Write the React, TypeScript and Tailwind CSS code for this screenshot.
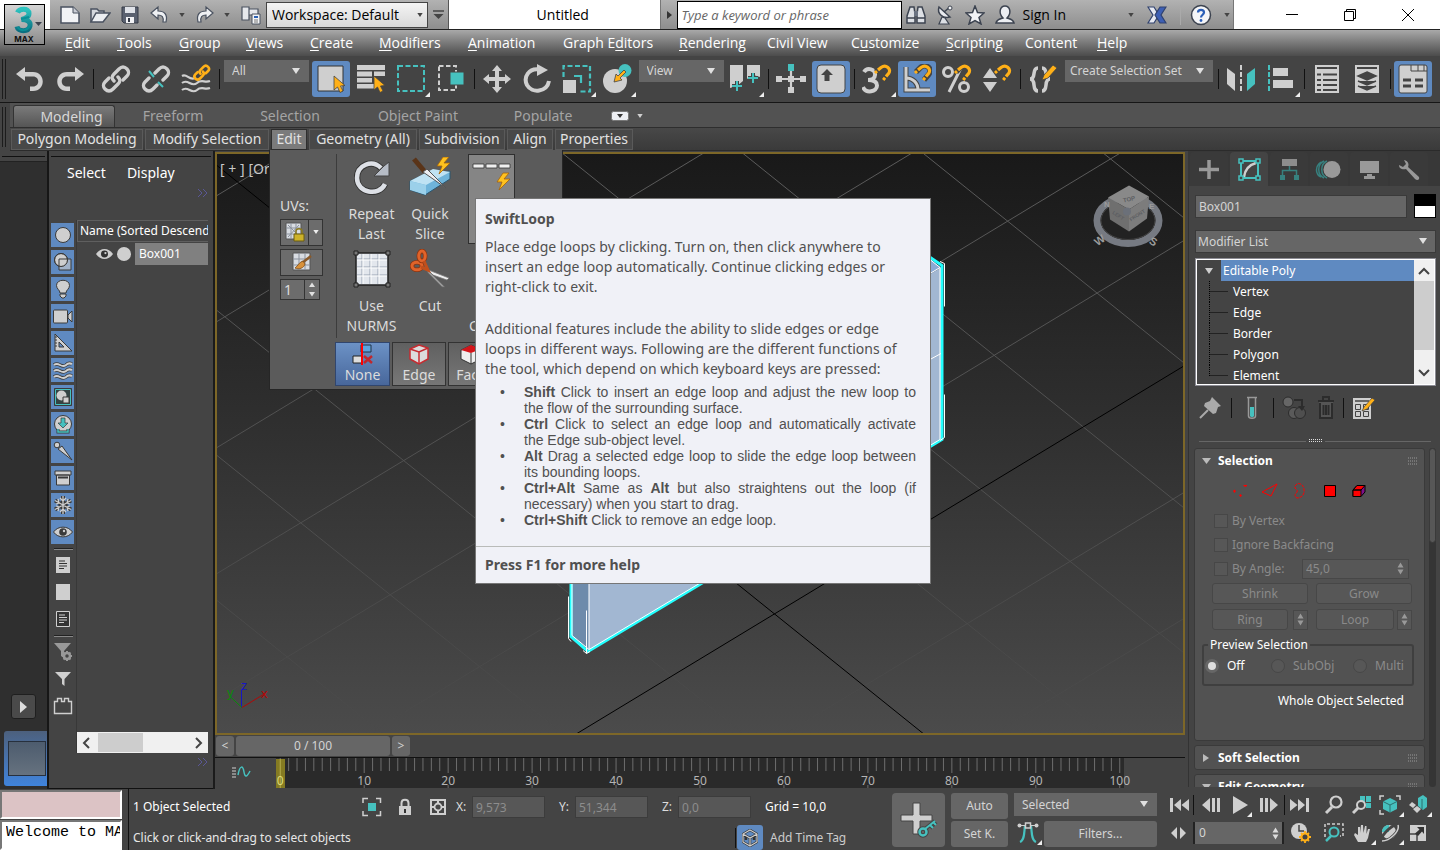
import React from "react";

const L = "#cfcfcf";
const T = "#46c1bf";
const O = "#ffb018";
const D = "#3a3a3a";

type IconProps = { w?: number; h?: number; vb?: string; children: React.ReactNode };
function Icon({ w = 30, h = 30, vb, children }: IconProps) {
  return (
    <svg width={w} height={h} viewBox={vb ?? `0 0 ${w} ${h}`} fill="none" className="shrink-0" aria-hidden="true">
      {children}
    </svg>
  );
}

function Caret({ color = "#e0e0e0", w = 8, h = 6 }: { color?: string; w?: number; h?: number }) {
  return (
    <Icon w={w} h={h} vb="0 0 8 6">
      <path d="M0 0H8L4 6Z" fill={color} />
    </Icon>
  );
}

function UpDown({ color = "#b5b5b5" }: { color?: string }) {
  return (
    <Icon w={7} h={13}>
      <path d="M0.5 5.5L3.5 0.5L6.5 5.5ZM0.5 7.5H6.5L3.5 12.5Z" fill={color} />
    </Icon>
  );
}

/* ---------- Title bar ---------- */

function SmallBtn({ label, width, children }: { label: string; width: string; children: React.ReactNode }) {
  return (
    <button aria-label={label} className={`flex h-7 items-center justify-center ${width}`}>
      {children}
    </button>
  );
}

function TitleBar() {
  return (
    <header className="relative flex h-[30px] items-stretch border-b border-[#222] bg-white font-['Open_Sans',sans-serif] text-[14px] text-black">
      <button
        aria-label="Application menu"
        className="absolute left-1 top-1 z-20 flex h-[41px] w-[41px] items-center border border-black bg-gradient-to-b from-[#d6d6d6] to-[#8b8b8b]"
      >
        <Icon w={39} h={39}>
          <defs>
            <linearGradient id="logo" x1="0" y1="0" x2="0" y2="1">
              <stop offset="0" stopColor="#2ec4c0" />
              <stop offset="1" stopColor="#0b6f80" />
            </linearGradient>
          </defs>
          <path d="M12.500 7.500C14 3.500 24 2.500 24 8.500C24 12.500 20 13.500 16.500 14.500C22 14.500 26 16.500 25 21C23.500 27.500 13 27 12 21.500" stroke="url(#logo)" strokeWidth="5" />
          <path d="M16 14L24 12M12.500 22C15 26 22 27 25 20" stroke="#0a8f96" strokeWidth="2" />
          <path d="M30 17H37L33.500 21Z" fill="#3d4450" />
          <text x="19" y="37" textAnchor="middle" fontSize="8" fontWeight="700" fill="#111" fontFamily="Inter">MAX</text>
        </Icon>
      </button>
      <div className="w-[50px] shrink-0" />
      <div className="flex shrink-0 items-center border-r border-[#555] bg-gradient-to-b from-[#b2b2b2] to-[#8e8e8e] pl-[5px]">
        <SmallBtn label="New" width="w-[30px]">
          <Icon w={22} h={20}><path d="M2 2H14L20 8V18H2Z" fill="#f1f2f5" stroke="#4a5260" strokeWidth="1.500" /><path d="M14 2V8H20" fill="#c9ccd4" stroke="#4a5260" /></Icon>
        </SmallBtn>
        <SmallBtn label="Open" width="w-[30px]">
          <Icon w={22} h={20}><path d="M2 17V4H8L10 6H15V9" fill="#d4d7dd" stroke="#4a5260" strokeWidth="1.500" /><path d="M2 17L7 8H21L14 17Z" fill="#eceef2" stroke="#4a5260" strokeWidth="1.500" /></Icon>
        </SmallBtn>
        <SmallBtn label="Save" width="w-[30px]">
          <Icon w={20} h={20}><path d="M2 2H18V18H4L2 16Z" fill="#5a6170" stroke="#343a46" /><path d="M5 2H15V8H5Z" fill="#dfe2e8" /><path d="M6 12H14V18H6Z" fill="#f1f2f5" /><path d="M8 13H10V17H8Z" fill="#343a46" /></Icon>
        </SmallBtn>
        <SmallBtn label="Undo" width="w-[30px]">
          <Icon w={22} h={20}><path d="M2 8L9 2V6C15 6 19 9 17 17H14C15 12 13 10 9 10V14Z" fill="#eef0f3" stroke="#4a5260" strokeWidth="1.200" /></Icon>
        </SmallBtn>
        <SmallBtn label="Undo history" width="w-[14px]"><Caret color="#444" w={6} h={4} /></SmallBtn>
        <SmallBtn label="Redo" width="w-[30px]">
          <Icon w={22} h={20}><path d="M20 8L13 2V6C7 6 3 9 5 17H8C7 12 9 10 13 10V14Z" fill="#eef0f3" stroke="#4a5260" strokeWidth="1.200" /></Icon>
        </SmallBtn>
        <SmallBtn label="Redo history" width="w-[16px]"><Caret color="#444" w={6} h={4} /></SmallBtn>
        <SmallBtn label="Project folder" width="w-[31px]">
          <Icon w={22} h={22}><path d="M2 3H9V16H2ZM9 5H18V11H9Z" fill="#e6e8ec" stroke="#4a5260" strokeWidth="1.200" /><path d="M12 10H20V20H12Z" fill="#f4f5f7" stroke="#4a5260" /><path d="M14 12H18V14H14Z" fill="#2b62b5" /><path d="M14 16H18M14 18H18" stroke="#777" /></Icon>
        </SmallBtn>
        <div className="relative">
          <select aria-label="Workspace" defaultValue="d" className="block h-[26px] w-[162px] appearance-none border border-[#444] bg-gradient-to-b from-[#f4f4f4] to-[#d9d9d9] pl-[5px] text-[14px]">
            <option value="d">Workspace: Default</option>
          </select>
          <span className="pointer-events-none absolute right-[5px] top-[11px]"><Caret color="#444" w={6} h={4} /></span>
        </div>
        <SmallBtn label="Customize quick access" width="w-[20px]">
          <Icon w={11} h={9}><path d="M0 1H11" stroke="#444" strokeWidth="1.500" /><path d="M0.500 4H10.500L5.500 9Z" fill="#444" /></Icon>
        </SmallBtn>
      </div>
      <h1 className="flex flex-1 items-center justify-center pl-4">Untitled</h1>
      <div className="flex shrink-0 items-center border-x border-[#777] bg-gradient-to-b from-[#b2b2b2] to-[#8e8e8e]">
        <SmallBtn label="Collapse search" width="w-4"><Icon w={5} h={8}><path d="M0 0L5 4L0 8Z" fill="#333" /></Icon></SmallBtn>
        <input aria-label="Search help" placeholder="Type a keyword or phrase" className="h-7 w-[225px] border border-black bg-white pl-[3px] text-[13px] italic placeholder:text-[#666]" />
        <SmallBtn label="Search" width="w-[28px]">
          <Icon w={22} h={22}><path d="M2 12L5 3H9L10 10V19H2ZM20 12L17 3H13L12 10V19H20Z" fill="#dde0e5" stroke="#3c4350" strokeWidth="1.500" /><path d="M9 7H13V12H9Z" fill="#6b7382" /><path d="M2 14H10M12 14H20" stroke="#3c4350" strokeWidth="1.500" /></Icon>
        </SmallBtn>
        <SmallBtn label="Communication center" width="w-[30px]">
          <Icon w={20} h={22}><path d="M4 3C2 9 7 15 15 13Z" fill="#e8eaee" stroke="#3c4350" strokeWidth="1.500" /><path d="M9 8L15 3" stroke="#3c4350" strokeWidth="1.500" /><circle cx="15" cy="4" r="2" fill="#f4f5f7" stroke="#3c4350" /><path d="M7 13L4 20H14L10 14Z" fill="#dcdfe4" stroke="#3c4350" strokeWidth="1.200" /></Icon>
        </SmallBtn>
        <SmallBtn label="Favorites" width="w-[30px]">
          <Icon w={20} h={20}><path d="M10 1L12.500 7.500L19 8L14 12.500L16 19L10 15.500L4 19L6 12.500L1 8L7.500 7.500Z" fill="#f1f2f5" stroke="#3c4350" strokeWidth="1.500" /></Icon>
        </SmallBtn>
        <button className="flex items-center gap-[7px] pl-[5px] pr-[62px]">
          <Icon w={20} h={20}><path d="M1 18C2 14 5 14 8 13C3 8 5 1 10 1C15 1 17 8 12 13C15 14 18 14 19 18Z" fill="#eceef2" stroke="#3c4350" strokeWidth="1.500" /></Icon>
          <span>Sign In</span>
        </button>
        <Caret color="#444" w={6} h={4} />
        <SmallBtn label="Exchange" width="w-[46px]">
          <Icon w={20} h={18}><path d="M1 1H7L10 6V12L7 17H1L6 9Z" fill="#e6e9f2" stroke="#30426f" strokeWidth="1.200" /><path d="M19 1H13L8 9L13 17H19L14 9Z" fill="#3d5fb4" stroke="#30426f" strokeWidth="1.200" /></Icon>
        </SmallBtn>
        <span className="h-5 w-px bg-[#aaa]" />
        <SmallBtn label="Help" width="w-[40px]">
          <Icon w={22} h={22}><circle cx="11" cy="11" r="9.500" fill="#f4f5f8" stroke="#3c4350" strokeWidth="1.500" /><path d="M8 8.500C8 5 14 5 14 8.500C14 10.500 11 11 11 13.500" stroke="#2c5fb8" strokeWidth="2.200" /><circle cx="11" cy="16.500" r="1.400" fill="#2c5fb8" /></Icon>
        </SmallBtn>
        <SmallBtn label="Help menu" width="w-[12px]"><Caret color="#444" w={6} h={4} /></SmallBtn>
      </div>
      <div className="flex w-[206px] shrink-0 items-center justify-end pr-[3px]">
        <button aria-label="Minimize" className="flex w-[58px] justify-center"><Icon w={12} h={12}><path d="M0 5.500H12" stroke="#000" /></Icon></button>
        <button aria-label="Restore" className="flex w-[58px] justify-center"><Icon w={12} h={12}><path d="M0.500 2.500H9.500V11.500H0.500ZM2.500 2.500V0.500H11.500V9.500H9.500" stroke="#000" /></Icon></button>
        <button aria-label="Close" className="flex w-[58px] justify-center"><Icon w={12} h={12}><path d="M0 0L12 12M12 0L0 12" stroke="#000" /></Icon></button>
      </div>
    </header>
  );
}

/* ---------- Menu bar ---------- */

const menus: [string, number, string][] = [
  ["Edit", 0, "w-[52px]"],
  ["Tools", 0, "w-[62px]"],
  ["Group", 0, "w-[67px]"],
  ["Views", 0, "w-[64px]"],
  ["Create", 0, "w-[69px]"],
  ["Modifiers", 0, "w-[89px]"],
  ["Animation", 0, "w-[95px]"],
  ["Graph Editors", 7, "w-[116px]"],
  ["Rendering", 0, "w-[88px]"],
  ["Civil View", -1, "w-[84px]"],
  ["Customize", 1, "w-[95px]"],
  ["Scripting", 0, "w-[79px]"],
  ["Content", -1, "w-[72px]"],
  ["Help", 0, "w-[60px]"],
];

function MenuBar() {
  return (
    <nav className="flex h-[26px] items-center bg-gradient-to-b from-[#a9a9a9] to-[#4c4c4c] pb-[2px] pl-[65px] font-['Open_Sans',sans-serif] text-[14px] text-white">
      {menus.map(([name, u, w]) => (
        <button key={name} className={`whitespace-nowrap text-left ${w}`}>
          {u < 0 ? name : (
            <>{name.slice(0, u)}<span className="underline underline-offset-2">{name[u]}</span>{name.slice(u + 1)}</>
          )}
        </button>
      ))}
    </nav>
  );
}

/* ---------- Main toolbar ---------- */

function Sep() {
  return <span className="flex w-[6px] shrink-0 justify-center"><span className="h-5 w-px bg-[#111]" /></span>;
}

function Tool({ label, on, more, children }: { label: string; on?: boolean; more?: boolean; children: React.ReactNode }) {
  return (
    <button aria-label={label} className="flex h-9 w-10 shrink-0 items-center justify-center">
      <span className={`relative flex h-9 w-[38px] items-center justify-center rounded-[3px] ${on ? "bg-[#5f8ac1]" : ""}`}>
        {children}
        {more && <span className="absolute bottom-0 right-0"><Icon w={5} h={5}><path d="M5 0V5H0Z" fill="#eee" /></Icon></span>}
      </span>
    </button>
  );
}

function ToolSelect({ label, value, box, cell }: { label: string; value: string; box: string; cell: string }) {
  return (
    <div className={`flex h-[38px] shrink-0 items-start justify-center ${cell}`}>
      <div className="relative">
        <select aria-label={label} defaultValue={value} className={`block h-[22px] appearance-none bg-[#666] text-[12px] text-[#d4d4d4] ${box}`}>
          <option>{value}</option>
        </select>
        <span className="pointer-events-none absolute right-[9px] top-2"><Caret /></span>
      </div>
    </div>
  );
}

const chain = (c: string) => (
  <g stroke={c} strokeWidth="3.400" strokeLinecap="round">
    <path d="M13 17C10 14 11 12 13 10L18 5C21 2 24 3 26 5C28 7 28 10 26 12L22 16" />
    <path d="M17 13C20 16 19 18 17 20L12 25C9 28 6 27 4 25C2 23 2 20 4 18L8 14" />
  </g>
);

const magnet = (
  <g>
    <path d="M14 8L18 4C23 -1 31 4 27 10L22 16" stroke="#444" strokeWidth="5.500" />
    <path d="M16 6L19 3.500C24 0 30 5 26.500 9.500L24 12.500" stroke={O} strokeWidth="3.200" />
    <path d="M13 9L15 7.200M23 13.800L21.200 16" stroke={O} strokeWidth="3" />
  </g>
);

const pointer = <path d="M18 12V26L21.500 23L24 28.500L27 27L24.500 22L29 21.500Z" fill={O} stroke="#444" strokeWidth="0.800" />;

function MainToolbar() {
  return (
    <div className="flex h-[47px] items-center border-b border-[#161616] bg-[#444] pl-[2px] text-[#d4d4d4]">
      <span className="mr-1 h-10 w-1 shrink-0 border-x border-[#1c1c1c]" />
      <Tool label="Undo"><Icon><path d="M1 10L10 3V8H18C31 8 31 27 18 27H15V22.500H18C25 22.500 25 12.500 18 12.500H10V17Z" fill={L} /></Icon></Tool>
      <Tool label="Redo"><Icon><path d="M29 10L20 3V8H12C-1 8 -1 27 12 27H15V22.500H12C5 22.500 5 12.500 12 12.500H20V17Z" fill={L} /></Icon></Tool>
      <Sep />
      <Tool label="Link"><Icon>{chain(L)}</Icon></Tool>
      <Tool label="Unlink">
        <Icon>
          <g stroke={L} strokeWidth="3.400" strokeLinecap="round">
            <path d="M14 9L18 5C21 2 24 3 26 5C28 7 28 10 26 12L22 16" />
            <path d="M16 21L12 25C9 28 6 27 4 25C2 23 2 20 4 18L8 14" />
          </g>
          <path d="M8 7L13 13M17 18L22 23" stroke={T} strokeWidth="2" />
        </Icon>
      </Tool>
      <Tool label="Bind to space warp">
        <Icon>
          <path d="M1 12C6 9 8 17 14 14M1 19C7 14 10 24 16 19C20 15 24 19 29 17M1 26C7 21 10 31 16 26C20 22 24 26 29 24" stroke={L} strokeWidth="2.200" />
          <g transform="translate(12 0) scale(0.58)" stroke={O} strokeWidth="4.500" strokeLinecap="round">
            <path d="M13 17C10 14 11 12 13 10L18 5C21 2 24 3 26 5C28 7 28 10 26 12L22 16" />
            <path d="M17 13C20 16 19 18 17 20L12 25C9 28 6 27 4 25C2 23 2 20 4 18L8 14" />
          </g>
        </Icon>
      </Tool>
      <Sep />
      <ToolSelect label="Selection filter" value="All" box="w-[85px] pl-2" cell="w-[89px]" />
      <Tool label="Select object" on><Icon><path d="M2 2H27V27H2Z" fill={L} stroke="#333" />{pointer}</Icon></Tool>
      <Tool label="Select by name"><Icon><path d="M1 1H29V6H1ZM1 7.500H16V12.500H1ZM1 14H16V18.500H1ZM1 20H18V24.500H1ZM18 7.500H29V12H18Z" fill={L} />{pointer}</Icon></Tool>
      <Tool label="Rectangular region" more><Icon><path d="M2 2H28V27H2Z" stroke={T} strokeWidth="2" strokeDasharray="5 2.500" /></Icon></Tool>
      <Tool label="Window crossing"><Icon><path d="M3 2H20V26H3Z" stroke={L} strokeWidth="2" strokeDasharray="4.500 2.500" /><path d="M14 8H28V21H14Z" fill={T} stroke="#444" /></Icon></Tool>
      <Sep />
      <Tool label="Move"><Icon><path d="M15 1L20 7H17V13H23V10L29 15L23 20V17H17V23H20L15 29L10 23H13V17H7V20L1 15L7 10V13H13V7H10Z" fill={L} /></Icon></Tool>
      <Tool label="Rotate"><Icon><path d="M17 5.500C7 4 1 13 5 21C10 30 25 28 27 17" stroke={L} strokeWidth="4" /><path d="M15 0L26 6L15 12Z" fill={L} /></Icon></Tool>
      <Tool label="Scale" more><Icon><path d="M1.500 13V2H28V27.500H17" stroke={T} strokeWidth="2.200" strokeDasharray="5 2.500" /><path d="M1 16H14V29H1Z" fill={L} /><path d="M12 12H19V19" stroke={T} strokeWidth="2.200" /></Icon></Tool>
      <Tool label="Place" more><Icon><circle cx="13" cy="17" r="12" fill={L} /><circle cx="23" cy="6.500" r="6.500" fill={T} /><path d="M12 18L14 10L16 12L22 6L24 8L18 14L20 16Z" fill={O} stroke="#444" strokeWidth="0.800" /></Icon></Tool>
      <ToolSelect label="Reference coordinates" value="View" box="w-[85px] pl-2" cell="w-[88px]" />
      <Tool label="Pivot center" more><Icon w={32} h={30}><path d="M1 1H14V17L8 22L1 24ZM18 1H31V13L24 11L18 15Z" fill={L} /><path d="M8 17V27M3 22H13M24 9V19M19 14H29" stroke="#444" strokeWidth="4" /><path d="M8 17V27M3 22H13M24 9V19M19 14H29" stroke={T} strokeWidth="2" /></Icon></Tool>
      <Sep />
      <Tool label="Manipulate"><Icon><path d="M15 5V25M4 15H26" stroke={L} strokeWidth="2.200" /><path d="M12 0H18V7H12Z" fill={T} /><path d="M0 12H6V18H0ZM24 12H30V18H24ZM12 23H18V29H12Z" fill={L} /><path d="M12 12H18V18H12Z" fill={L} /></Icon></Tool>
      <Tool label="Keyboard override" on><Icon><rect x="1" y="1" width="28" height="28" rx="4" fill={L} stroke="#444" /><path d="M11 5L17 11H13.500V17H8.500V11H5Z" fill="#444" /></Icon></Tool>
      <Sep />
      <Tool label="Snaps" more><Icon><path d="M2 8C5 3 14 5 13 11C13 14 10 16 6 16C11 16 15 17 15 21.500C15 28 4 30 1 23" stroke={L} strokeWidth="4" />{magnet}</Icon></Tool>
      <Tool label="Angle snap" on><Icon><path d="M4 3V26H28M4 14C11 14 16 19 16 26" stroke="#444" strokeWidth="5" /><path d="M4 3V26H28M4 14C11 14 16 19 16 26" stroke={L} strokeWidth="3" />{magnet}</Icon></Tool>
      <Tool label="Percent snap"><Icon><circle cx="6" cy="8" r="4.500" stroke={L} strokeWidth="3" /><circle cx="22" cy="23" r="4.500" stroke={L} strokeWidth="3" /><path d="M19 4L7 28" stroke={L} strokeWidth="3" />{magnet}</Icon></Tool>
      <Tool label="Spinner snap"><Icon><path d="M1 14L8 4L15 14ZM1 18H15L8 28Z" fill={L} />{magnet}</Icon></Tool>
      <Sep />
      <Tool label="Edit selection sets"><Icon><path d="M10 4C3 4 9 15 2 15C9 15 3 27 10 27M14 4C21 4 15 15 22 15C15 15 21 27 14 27" stroke={L} strokeWidth="3.500" /><path d="M14 16L16 11L25 1L29 4L20 14Z" fill={O} stroke="#444" strokeWidth="0.800" /></Icon></Tool>
      <ToolSelect label="Create selection set" value="Create Selection Set" box="w-[148px] pl-[5px]" cell="w-[152px]" />
      <Sep />
      <Tool label="Mirror"><Icon><path d="M1 4L9 10V27L1 20Z" fill={L} /><path d="M29 4L21 10V27L29 20Z" fill={T} /><path d="M15 1V29" stroke={L} strokeWidth="2" strokeDasharray="5 2" /></Icon></Tool>
      <Tool label="Align" more><Icon><path d="M3 1V29" stroke={T} strokeWidth="2" strokeDasharray="5 2" /><path d="M7 4H22V12H7ZM7 16H27V24H7Z" fill={L} /></Icon></Tool>
      <Sep />
      <Tool label="Layer explorer"><Icon><path d="M3 1H27V29H3Z" fill={L} /><path d="M5 4H25M5 10.500H9M11 10.500H25M5 16H9M11 16H25M5 21H9M11 21H25M5 26H9M11 26H25" stroke="#444" strokeWidth="2.200" /></Icon></Tool>
      <Tool label="Layer manager"><Icon><path d="M3 1H27V29H3Z" fill={L} /><path d="M5 4H25" stroke="#444" strokeWidth="2" /><path d="M15 8L24 12L15 16L6 12ZM6 17L15 21L24 17M6 22L15 26L24 22" fill="#444" stroke="#444" strokeWidth="1.500" /></Icon></Tool>
      <Sep />
      <Tool label="Toggle ribbon" on><Icon><rect x="1" y="1" width="28" height="28" rx="2" fill={L} stroke="#444" /><path d="M13 1V7H29M20 1V7M26 1V7" stroke="#444" /><path d="M5 16H13M17 16H25M5 22H13M17 22H25" stroke="#444" strokeWidth="3" /></Icon></Tool>
    </div>
  );
}

/* ---------- Ribbon ---------- */

const ribbonTabs: [string, string][] = [
  ["Freeform", "w-[116px]"],
  ["Selection", "w-[118px]"],
  ["Object Paint", "w-[138px]"],
  ["Populate", "w-[112px]"],
];

function RibbonBtn({ name, width }: { name: string; width: string }) {
  return <button className={`h-[21px] whitespace-nowrap border border-[#5a5a5a] bg-[#484848] text-center leading-[18px] ${width}`}>{name}</button>;
}

function Ribbon() {
  return (
    <div className="flex h-12 shrink-0 bg-[#444] font-['Noto_Sans',sans-serif] text-[14px] text-[#e2e2e2]">
      <div className="w-[10px] shrink-0 py-1 pl-[2px]"><div className="h-full w-1 border-x border-[#1c1c1c]" /></div>
      <div className="flex-1">
        <div className="flex h-[25px] items-end border-b border-[#2e2e2e] bg-[#525252] pl-[3px] text-[#a4a4a4]">
          <button className="h-[22px] w-[102px] rounded-t-[3px] border border-b-0 border-[#333] bg-gradient-to-b from-[#7b7b7b] to-[#555] pl-[15px] leading-5 text-[#d8d8d8]">Modeling</button>
          {ribbonTabs.map(([n, w]) => <button key={n} className={`h-[22px] leading-5 ${w}`}>{n}</button>)}
          <button aria-label="Ribbon display" className="flex h-[22px] items-center gap-2 pl-3">
            <Icon w={18} h={10}><rect x="0.500" y="0.500" width="17" height="9" rx="2" fill="#eceef2" stroke="#777" /><path d="M6 3H12L9 7Z" fill="#333" /></Icon>
            <Caret color="#d0d0d0" w={6} h={4} />
          </button>
        </div>
        <div className="flex h-[23px] items-center gap-[2px] border-b border-[#2b2b2b] bg-gradient-to-b from-[#484848] to-[#3a3a3a] pl-px">
          <RibbonBtn name="Polygon Modeling" width="w-[132px]" />
          <RibbonBtn name="Modify Selection" width="w-[124px]" />
          <div className="relative z-30 w-[36px]">
            <button className="h-[21px] w-full border border-[#2e2e2e] bg-[#7b7b7b] leading-[18px]">Edit</button>
            <EditPanel />
          </div>
          <RibbonBtn name="Geometry (All)" width="w-[108px]" />
          <RibbonBtn name="Subdivision" width="w-[86px]" />
          <RibbonBtn name="Align" width="w-[46px]" />
          <RibbonBtn name="Properties" width="w-[78px]" />
        </div>
      </div>
    </div>
  );
}

function BigTool({ lines, children, width }: { lines: string[]; children: React.ReactNode; width: string }) {
  return (
    <button className={`flex flex-col items-center ${width}`}>
      <span className="mb-1 flex h-[46px] items-center">{children}</span>
      {lines.map((l) => <span key={l} className="whitespace-nowrap leading-5">{l}</span>)}
    </button>
  );
}

const bolt = <path d="M8 0L2 9H7L4 17L15 6H9L14 0Z" fill="#ffc21f" stroke="#a4620a" strokeWidth="0.800" />;

function EditPanel() {
  return (
    <div className="absolute -left-[2px] top-full h-[240px] w-[294px] border border-t-0 border-[#262626] bg-[#5b5b5b] text-[#dcdcdc]">
      <div className="flex h-[188px] pt-1">
        <div className="flex w-[67px] flex-col gap-[3px] border-r border-[#3c3c3c] pl-[10px] pt-[42px]">
          <span className="leading-5">UVs:</span>
          <div className="flex h-[27px] w-[43px] border border-[#333] bg-[#6c6c6c]">
            <button aria-label="Preserve UVs" className="flex w-7 items-center justify-center border-r border-[#333]">
              <Icon w={20} h={20}><path d="M1 1H16V17H1Z" fill="#d8dce2" stroke="#555" /><path d="M1 6H16M1 12H16M6 1V17M11 1V17M3 3L14 14M14 3L3 15" stroke="#8a919c" /><path d="M11 12V9C11 6 17 6 17 9V12" stroke="#8a7a20" strokeWidth="1.500" /><path d="M9 12H19V19H9Z" fill="#cdb22a" stroke="#6d5e10" /></Icon>
            </button>
            <button aria-label="Preserve UVs settings" className="flex flex-1 items-center justify-center"><Caret color="#eee" w={6} h={4} /></button>
          </div>
          <button aria-label="Tweak UVs" className="flex h-[27px] w-[43px] items-center justify-center border border-[#333] bg-[#6c6c6c]">
            <Icon w={20} h={20}><path d="M1 1H18V18H1Z" fill="#d8dce2" stroke="#555" /><path d="M1 7H18M1 13H18M7 1V18M13 1V18" stroke="#8a919c" /><path d="M19 4L10 11" stroke="#8a5a2a" strokeWidth="2.500" /><path d="M11 9C7 10 6 14 3 16C7 18 12 16 13 12Z" fill="#d8913a" stroke="#7a4a18" strokeWidth="0.800" /></Icon>
          </button>
          <div className="flex h-[21px] w-10 items-center border border-[#333] bg-[#6c6c6c]">
            <input aria-label="Iterations" defaultValue="1" className="h-full w-6 border-r border-[#333] bg-transparent pl-[3px]" />
            <span className="flex flex-1 justify-center"><Icon w={8} h={17}><path d="M1 6L4 1.500L7 6ZM1 11H7L4 15.500Z" fill="#e0e0e0" /></Icon></span>
          </div>
        </div>
        <div className="flex flex-1">
          <div className="flex w-[69px] flex-col items-center gap-[2px]">
            <BigTool lines={["Repeat", "Last"]} width="w-[69px]">
              <Icon w={36} h={36}><path d="M27 9C18 0 3 6 3 19C3 34 25 38 31 25" stroke="#333" strokeWidth="6.500" /><path d="M27 9C18 0 3 6 3 19C3 34 25 38 31 25" stroke="#dde0e6" strokeWidth="4.500" /><path d="M35 3V17H20L25 12L30 7Z" fill="#b6bcc6" stroke="#444" /></Icon>
            </BigTool>
            <BigTool lines={["Use", "NURMS"]} width="w-[73px]">
              <Icon w={38} h={38}><path d="M3 3H35V35H3Z" fill="#e3e7ed" stroke="#222" strokeWidth="1.500" /><path d="M9 4V34M17 4V34M25 4V34M4 9H34M4 17H34M4 25H34" stroke="#98a3b3" /><path d="M10 4V34M18 4V34M26 4V34M4 10H34M4 18H34M4 26H34" stroke="#fff" /><path d="M1 1H5V5H1ZM33 1H37V5H33ZM1 33H5V37H1ZM33 33H37V37H33Z" fill="#777" stroke="#222" /></Icon>
            </BigTool>
          </div>
          <div className="flex w-12 flex-col items-center gap-[2px]">
            <BigTool lines={["Quick", "Slice"]} width="w-[48px]">
              <Icon w={42} h={40}><path d="M1 24L16 17L41 14V22L16 38L1 33Z" fill="#6fb4da" stroke="#2b566f" /><path d="M1 24L24 12L41 15L17 28Z" fill="#bfe2f3" /><path d="M1 24L17 28V38L1 33Z" fill="#9bd0ea" /><path d="M5 2L16 15" stroke="#5a3418" strokeWidth="5" /><path d="M14 15L18 12L37 31Z" fill="#eceef2" stroke="#555" /><g transform="translate(26 0)">{bolt}</g></Icon>
            </BigTool>
            <BigTool lines={["Cut"]} width="w-[48px]">
              <Icon w={40} h={40}><path d="M16 20L39 29L37 31L20 25Z" fill="#eee" stroke="#777" strokeWidth="0.800" /><path d="M16 19L35 38L32 38L18 24Z" fill="#999" stroke="#666" strokeWidth="0.800" /><ellipse cx="7" cy="17" rx="5" ry="3.800" stroke="#8f3510" strokeWidth="4.500" /><ellipse cx="7" cy="17" rx="5" ry="3.800" stroke="#e0632a" strokeWidth="3" /><ellipse cx="12" cy="7" rx="3.200" ry="5" stroke="#8f3510" strokeWidth="4.500" /><ellipse cx="12" cy="7" rx="3.200" ry="5" stroke="#e0632a" strokeWidth="3" /><path d="M11 18L18 21L14 12" stroke="#c04f1c" strokeWidth="3" /></Icon>
            </BigTool>
          </div>
          <div className="relative w-[70px] pl-[14px]">
            <button aria-label="SwiftLoop" className="flex h-[90px] w-[47px] flex-col items-center border border-[#2f2f2f] bg-[#858585] pt-2">
              <Icon w={40} h={28}><path d="M1 1H12V5H1ZM14 1H25V5H14ZM27 1H38V5H27Z" fill="#f0f0f0" stroke="#333" strokeWidth="0.800" /><g transform="translate(23 10)">{bolt}</g></Icon>
            </button>
            <div className="whitespace-nowrap pl-px pt-[72px] leading-5">Constraints</div>
            <Tooltip />
          </div>
        </div>
      </div>
      <div className="flex gap-[2px] overflow-hidden pl-[65px] pt-1">
        <button className="flex h-11 w-[55px] flex-col items-center border border-[#31466e] bg-gradient-to-b from-[#6c92c6] to-[#48679b]">
          <Icon w={22} h={22}><path d="M9 2H19V9H9Z" fill="#5aa3df" stroke="#234" /><path d="M1 13H10V20H1Z" fill="#ddd" stroke="#222" /><path d="M10 0V22" stroke="#f00" strokeWidth="2" /><path d="M12 13L20 20M20 13L12 20" stroke="#c0282d" strokeWidth="2.500" /></Icon>
          <span className="leading-5">None</span>
        </button>
        <button className="flex h-11 w-[54px] flex-col items-center border border-[#333] bg-gradient-to-b from-[#606060] to-[#777]">
          <Icon w={22} h={22}><path d="M2 6L11 2L20 5V16L11 21L2 16Z" fill="#dcdcdc" stroke="#c62b30" strokeWidth="1.500" /><path d="M2 6L11 9L20 5M11 9V21" stroke="#c62b30" strokeWidth="1.500" /></Icon>
          <span className="leading-5">Edge</span>
        </button>
        <button className="flex h-11 w-[46px] flex-col items-center border border-[#333] bg-gradient-to-b from-[#606060] to-[#777]">
          <Icon w={22} h={22}><path d="M1 7L11 2L21 6V16L11 21L1 16Z" fill="#eee" stroke="#333" /><path d="M1 7L11 2L21 6L11 10Z" fill="#d3141a" /><path d="M11 10V21" stroke="#333" /></Icon>
          <span className="leading-5">Face</span>
        </button>
      </div>
    </div>
  );
}

const keys: React.ReactNode[] = [
  <><b>Shift</b> Click to insert an edge loop and adjust the new loop to the flow of the surrounding surface.</>,
  <><b>Ctrl</b> Click to select an edge loop and automatically activate the{"\u00a0"}Edge sub-object level.</>,
  <><b>Alt</b> Drag a selected edge loop to slide the edge loop between its bounding loops.</>,
  <><b>Ctrl+Alt</b> Same as <b>Alt</b> but also straightens out the loop (if necessary) when you start to drag.</>,
  <><b>Ctrl+Shift</b> Click to remove an edge loop.</>,
];

function Tooltip() {
  return (
    <div role="tooltip" className="absolute left-[21px] top-[44px] w-[456px] border border-[#767676] bg-[#f0f1f7] text-[#505050]">
      <div className="px-[9px] pt-[10px]">
        <div className="font-bold leading-5">SwiftLoop</div>
        <p className="whitespace-nowrap pt-2 leading-5">
          Place edge loops by clicking. Turn on, then click anywhere to<br />
          insert an edge loop automatically. Continue clicking edges or<br />
          right-click to exit.
        </p>
        <p className="whitespace-nowrap pt-[22px] leading-5">
          Additional features include the ability to slide edges or edge<br />
          loops in different ways. Following are the different functions of<br />
          the tool, which depend on which keyboard keys are pressed:
        </p>
      </div>
      <ul className="pb-[18px] pl-6 pr-[14px] pt-[5px] font-['Liberation_Sans',sans-serif] text-[14px] leading-4">
        {keys.map((k, i) => (
          <li key={i} className="flex">
            <span className="w-6 shrink-0">•</span>
            <p className="flex-1 text-justify">{k}</p>
          </li>
        ))}
      </ul>
      <div className="border-t border-[#b9bbb9] px-[9px] py-2 font-bold leading-5">Press F1 for more help</div>
    </div>
  );
}

/* ---------- Left side ---------- */

function LeftStrip() {
  return (
    <div className="flex w-[49px] shrink-0 flex-col justify-end border-r-2 border-[#161616] bg-[#2f2f2f]">
      <div className="mb-auto h-[11px] border-b border-[#222] bg-[#444] pt-[5px]"><div className="mx-[2px] h-px bg-[#111]" /></div>
      <button aria-label="Expand" className="mb-3 ml-[11px] flex h-[25px] w-[25px] items-center justify-center rounded-[3px] border border-[#1f1f1f] bg-[#4a4a4a]">
        <Icon w={7} h={12}><path d="M0 0L7 6L0 12Z" fill="#ddd" /></Icon>
      </button>
      <div className="mb-[3px] ml-1 h-[55px] rounded-l-[3px] bg-gradient-to-b from-[#4c607d] to-[#3f84dd] pl-1 pt-[10px]">
        <button aria-label="Viewport layout" className="h-[35px] w-[38px] border border-[#27303d] bg-gradient-to-b from-[#4d5c6e] to-[#66727f]" />
      </div>
    </div>
  );
}

const catIcons: [string, React.ReactNode][] = [
  ["Geometry", <circle cx="10" cy="10" r="7.500" fill={L} stroke={D} />],
  ["Shapes", <><circle cx="8" cy="8" r="6.500" fill={L} stroke={D} /><path d="M6 7H18V18H6Z" fill={L} fillOpacity="0.600" stroke={D} /><circle cx="8" cy="8" r="6.500" stroke={D} /></>],
  ["Lights", <><path d="M7 14C7 11 3.500 10 3.500 6.500C3.500 -0.500 16.500 -0.500 16.500 6.500C16.500 10 13 11 13 14Z" fill={L} stroke={D} /><path d="M7 15H13V17L11 19H9L7 17Z" fill={L} stroke={D} /></>],
  ["Cameras", <><rect x="0.500" y="4" width="14" height="13" rx="1" fill={L} stroke={D} /><path d="M15 9L19 5V16L15 12Z" fill={L} stroke={D} /></>],
  ["Helpers", <><path d="M2 1V18H19Z" fill={L} stroke={D} /><path d="M6 9V14H11Z" fill="#5f8ac1" stroke={D} /><path d="M2 4H4M2 7H4M2 10H4M2 13H4" stroke={D} /></>],
  ["Space warps", <g><path d="M1 5C6 1 8 9 13 5C15 3 17 3 19 4M1 11C6 7 8 15 13 11C15 9 17 9 19 10M1 17C6 13 8 21 13 17C15 15 17 15 19 16" stroke={D} strokeWidth="3.500" /><path d="M1 5C6 1 8 9 13 5C15 3 17 3 19 4M1 11C6 7 8 15 13 11C15 9 17 9 19 10M1 17C6 13 8 21 13 17C15 15 17 15 19 16" stroke={L} strokeWidth="2" /></g>],
  ["Groups", <><path d="M1.500 1.500H18.500V18.500H1.500Z" fill="#344" stroke={D} /><path d="M2.500 2.500H17.500V17.500H2.500Z" stroke={T} /><circle cx="8.500" cy="8.500" r="5" fill={L} /><path d="M10 10H16V16H10Z" fill={L} stroke={D} /></>],
  ["Xrefs", <><circle cx="10" cy="10" r="8.500" fill={L} stroke={D} /><path d="M8 4H12V9H15L10 14L5 9H8Z" fill={T} stroke={D} strokeWidth="0.700" /><path d="M5 15V18H15V15" stroke={D} strokeWidth="3" /><path d="M5 15V18H15V15" stroke={T} strokeWidth="1.500" /></>],
  ["Bones", <><path d="M5 8L9 5L19 19Z" fill={L} stroke={D} /><circle cx="4" cy="4" r="2.800" fill={L} stroke={D} /></>],
  ["Containers", <><path d="M2 3H18V7H2ZM3.500 7H16.500V17H3.500Z" fill={L} stroke={D} /><path d="M5 9.500H15" stroke={D} strokeWidth="2" /></>],
  ["Frozen", <><g stroke={D} strokeWidth="4"><path d="M10 1V19M2 5.500L18 14.500M18 5.500L2 14.500" /></g><g stroke={L} strokeWidth="1.800"><path d="M10 1V19M2 5.500L18 14.500M18 5.500L2 14.500M7 3L10 6L13 3M7 17L10 14L13 17M3 9L6 8L5 4M17 9L14 8L15 4M3 11L6 12L5 16M17 11L14 12L15 16" strokeWidth="1.300" /></g></>],
  ["Hidden", <><path d="M0.500 10C5 3.500 15 3.500 19.500 10C15 16.500 5 16.500 0.500 10Z" fill={L} stroke={D} /><circle cx="10" cy="10" r="3.800" fill={D} /><circle cx="11" cy="9" r="1.200" fill={L} /></>],
];

const plainIcons: [string, React.ReactNode][] = [
  ["Display all", <><path d="M3 2H17V18H3Z" fill={L} /><path d="M6 6H12M6 8.500H14M6 11H14M6 13.500H11" stroke="#333" /></>],
  ["Display none", <path d="M3 2H17V18H3Z" fill={L} />],
  ["Invert display", <><path d="M3.500 2.500H16.500V17.500H3.500Z" fill="#333" stroke={L} /><path d="M6 6H12M6 8.500H14M6 11H14M6 13.500H11" stroke={L} /></>],
];

const filterIcons: [string, React.ReactNode][] = [
  ["Advanced filter", <><path d="M1 1H18L11 9V16L8 14V9Z" fill="#999" /><circle cx="14" cy="14" r="3" stroke="#999" strokeWidth="2.500" /><path d="M14 9V10.500M14 17.500V19M9 14H10.500M17.500 14H19M10.500 10.500L11.500 11.500M16.500 16.500L17.500 17.500M17.500 10.500L16.500 11.500M11.500 16.500L10.500 17.500" stroke="#999" strokeWidth="2" /></>],
  ["Filter", <path d="M2 3H18L11.500 10V17L9 15V10Z" fill={L} />],
  ["Blocks", <path d="M1.500 17.500V5.500H4.500V2.500H8.500V5.500H11.500V2.500H15.500V5.500H18.500V17.500Z" stroke={L} strokeWidth="1.400" />],
];

function SceneExplorer() {
  return (
    <aside className="flex w-[166px] shrink-0 flex-col border-r-2 border-[#1b1b1b] bg-[#444] text-[12px] text-white">
      <div className="mx-[2px] mt-[5px] h-px bg-[#111]" />
      <div className="flex gap-[21px] pl-[18px] pt-[6px] font-['Noto_Sans',sans-serif] text-[14px] leading-5">
        <button>Select</button>
        <button>Display</button>
      </div>
      <div className="flex h-[37px] items-start justify-end pr-[5px] pt-[6px]">
        <Icon w={11} h={8}><path d="M1 0L5 4L1 8M6 0L10 4L6 8" stroke="#5a5796" /></Icon>
      </div>
      <div className="flex min-h-0 flex-1">
        <div className="flex w-[27px] shrink-0 flex-col gap-[3px] pl-[2px] pt-[3px]">
          {catIcons.map(([n, g]) => (
            <button key={n} aria-label={n} className="flex h-6 w-[23px] shrink-0 items-center justify-center bg-[#5f8ac1]"><Icon w={20} h={20}>{g}</Icon></button>
          ))}
          <span className="mt-px h-[2px] w-[19px] self-center border-t border-[#222] bg-[#888]" />
          {plainIcons.map(([n, g]) => (
            <button key={n} aria-label={n} className="flex h-6 w-[23px] shrink-0 items-center justify-center"><Icon w={20} h={20}>{g}</Icon></button>
          ))}
          <span className="mt-px h-[2px] w-[19px] self-center border-t border-[#222] bg-[#888]" />
          {filterIcons.map(([n, g]) => (
            <button key={n} aria-label={n} className="flex h-6 w-[23px] shrink-0 items-center justify-center"><Icon w={20} h={20}>{g}</Icon></button>
          ))}
        </div>
        <div className="mr-[5px] flex min-w-0 flex-1 flex-col border-l border-[#383838]">
          <div className="h-[22px] overflow-hidden whitespace-nowrap border border-r-0 border-[#5f5f5f] pl-[2px] leading-5">Name (Sorted Descending)</div>
          <div className="mt-px flex h-[22px] items-center">
            <span className="flex w-[58px] items-center justify-end gap-1 pr-1">
              <Icon w={17} h={12} vb="0 0 18 12"><path d="M0 6C5 -1 13 -1 18 6C13 13 5 13 0 6Z" fill={L} /><circle cx="9" cy="6" r="3.700" fill="#333" /><circle cx="10" cy="5" r="1.200" fill={L} /></Icon>
              <Icon w={14} h={14}><circle cx="7" cy="7" r="7" fill={L} /></Icon>
            </span>
            <button className="h-[22px] flex-1 bg-[#808080] pl-1 text-left">Box001</button>
          </div>
          <div className="mt-auto flex h-[21px] items-center justify-between bg-[#f0f0f0] px-[5px]">
            <Icon w={9} h={12}><path d="M7 1L2 6L7 11" stroke="#444" strokeWidth="2" /></Icon>
            <span className="mr-auto ml-[7px] h-[19px] w-[45px] bg-[#cdcdcd]" />
            <Icon w={9} h={12}><path d="M2 1L7 6L2 11" stroke="#444" strokeWidth="2" /></Icon>
          </div>
        </div>
      </div>
      <div className="flex h-9 items-start justify-end border-b border-[#111] pr-[5px] pt-[5px]">
        <Icon w={11} h={8}><path d="M1 0L5 4L1 8M6 0L10 4L6 8" stroke="#5a5796" /></Icon>
      </div>
    </aside>
  );
}

/* ---------- Viewport ---------- */

const X0 = 217;
const X1 = 1183;
const rising = [-56, 70, 196, 322, 448, 574, 700, 826, 1078, 1204];
const falling = [-559, -414, -269, -124, 21, 311, 456, 601];

function Viewport() {
  return (
    <section className="relative min-h-0 flex-1 border-2 border-[#7d6728] bg-gradient-to-b from-[#191919] to-[#4b4b4b]">
      <svg className="absolute inset-0 h-full w-full" viewBox="217 154 966 580" preserveAspectRatio="xMidYMid slice" fill="none" aria-label="Orthographic view">
        <defs>
          <linearGradient id="fade" gradientUnits="userSpaceOnUse" x1="0" y1="154" x2="0" y2="740">
            <stop offset="0" stopColor="#fff" />
            <stop offset="0.600" stopColor="#fff" stopOpacity="0.700" />
            <stop offset="1" stopColor="#fff" stopOpacity="0" />
          </linearGradient>
          <mask id="gridmask" maskUnits="userSpaceOnUse" x="217" y="154" width="966" height="580"><rect x="217" y="154" width="966" height="580" fill="url(#fade)" /></mask>
        </defs>
        <g stroke="#5c5c5c" mask="url(#gridmask)">
          {rising.map((c) => <line key={c} x1={X0} y1={c} x2={X1} y2={c - 0.605 * (X1 - X0)} />)}
          {falling.map((c) => <line key={c} x1={X0} y1={c} x2={X1} y2={c + 0.804 * (X1 - X0)} />)}
        </g>
        <g stroke="#000">
          <line x1={X0} y1={166} x2={X1} y2={943} />
          <line x1={577} y1={734} x2={X1} y2={367} />
        </g>
        <path d="M571 464L923 254L941 268L589 478Z" fill="#8ba9d4" />
        <path d="M571 464L589 478V651L571 637Z" fill="#6e8bab" />
        <path d="M589 478L941 268V440L589 651Z" fill="#a2b7d2" />
        <path d="M571 464V637L588 652L942 440V266L923 253" stroke="#2ff" strokeWidth="3" />
        <path d="M589 478V650L940 440V268L589 478M572 580V636L589 650M930 260L940 268M930 360L941 354" stroke="#fff" />
        <path d="M568.500 597V639L571 642M586.500 611V654L583 651M586.500 654L590 652M944.500 307V264L940 262M944.500 395V438L940 441" stroke="#fff" />
        <g>
          <ellipse cx="1128" cy="221" rx="31" ry="23" stroke="#767a82" strokeWidth="7" />
          <ellipse cx="1128" cy="221" rx="27" ry="19" fill="#222" stroke="#444" />
          <path d="M1129 186L1149 197L1129 210L1108 198Z" fill="#898989" />
          <path d="M1108 198L1129 210V232L1110 220Z" fill="#6f6f6f" />
          <path d="M1149 197L1129 210V232L1147 219Z" fill="#7c7c7c" />
          <circle cx="1127" cy="212" r="4" fill="#6b7079" />
          <g fontFamily="Liberation Sans" fontWeight="700" fill="#5c5e62">
            <text x="1123" y="202" fontSize="6" transform="rotate(-12 1128 200)">TOP</text>
            <text x="1131" y="222" fontSize="5" transform="rotate(-33 1131 222)">FRONT</text>
            <text x="1112" y="214" fontSize="5" transform="rotate(33 1112 214)">LEFT</text>
          </g>
          <g fontFamily="Liberation Sans" fontWeight="700" fontSize="11" fill="#9b9b9b">
            <text x="1094" y="244" transform="rotate(-35 1100 240)">W</text>
            <text x="1150" y="245" transform="rotate(30 1152 241)">S</text>
            <text x="1104" y="207" fontSize="8">N</text>
            <text x="1149" y="209" fontSize="8">E</text>
          </g>
        </g>
        <path d="M241.500 708V690" stroke="#1616c4" />
        <path d="M242 708L265 694" stroke="#b00808" />
        <path d="M242 708L230 697" stroke="#0a8a0a" />
        <g fontFamily="Noto Sans" fontSize="13">
          <text x="241" y="690" fill="#1616c4">z</text>
          <text x="261" y="698" fill="#b00808">x</text>
          <text x="227" y="697" fill="#0a8a0a">y</text>
        </g>
      </svg>
      <div className="relative flex gap-1 pl-[3px] pt-[5px] font-['Noto_Sans',sans-serif] text-[14px] leading-5 text-[#c9c9c9]">
        <button>[ + ]</button>
        <button>[Orthographic]</button>
      </div>
    </section>
  );
}

const frames = Array.from({ length: 101 }, (_, i) => i);
const pos = (i: number) => `${0.5 + i * 0.99}%`;

function TimeControls() {
  return (
    <div className="h-[54px] shrink-0 bg-[#444] text-[12px] text-[#d4d4d4]">
      <div className="flex h-[22px] items-start gap-[2px] pl-px pt-px">
        <button className="h-5 w-[18px] rounded-[3px] bg-[#666]">&lt;</button>
        <button className="h-5 w-[154px] rounded-[3px] bg-[#666]">0 / 100</button>
        <button className="h-5 w-[18px] rounded-[3px] bg-[#666]">&gt;</button>
      </div>
      <div className="flex h-8 border-t border-[#111]">
        <button aria-label="Open mini curve editor" className="flex w-[61px] shrink-0 items-start justify-center pr-[10px] pt-2">
          <Icon w={20} h={14}><path d="M1 2H5M1 5H5M1 8H5M1 11H5" stroke={L} strokeWidth="1.200" /><path d="M7 9C9 -2 12 0 13 6C14 12 16 11 19 5" stroke={T} strokeWidth="1.500" /></Icon>
        </button>
        <svg className="mr-[61px] h-[30px] min-w-0 flex-1 overflow-visible bg-[#2a2a2a]" aria-label="Track bar">
          {frames.map((i) => (
            <line key={i} x1={pos(i)} x2={pos(i)} y1="0" y2={i % 10 ? 13 : 15} stroke="#6e6e6e" />
          ))}
          {frames.filter((i) => i % 10 === 0 && i > 0).map((i) => (
            <g key={i}>
              <line x1={pos(i)} x2={pos(i)} y1="27" y2="30" stroke="#6e6e6e" />
              <text x={pos(i)} y="27" textAnchor="middle" fontSize="12" fill="#b4b4b4">{i}</text>
            </g>
          ))}
          <rect x="0" y="1" width="9" height="29" fill="#857b22" />
          <line x1={pos(0)} x2={pos(0)} y1="1" y2="30" stroke="#b5ad4c" />
          <text x={pos(0)} y="27" textAnchor="middle" fontSize="12" fill="#dedb7a">0</text>
        </svg>
      </div>
    </div>
  );
}

/* ---------- Command panel ---------- */

const cmdTabs: [string, React.ReactNode][] = [
  ["Create", <path d="M14 5V24M4 14.500H24" stroke="#999" strokeWidth="3.500" />],
  ["Modify", <><path d="M6 5V24M5 6H24M23 5V24M5 23H24" stroke={T} strokeWidth="2" /><path d="M9 22C10 14 14 10 21 8" stroke={L} strokeWidth="2.500" /><path d="M4 4H8V8H4ZM21 4H25V8H21ZM4 21H8V25H4ZM21 21H25V25H21Z" fill="#444" stroke={T} strokeWidth="1.500" /></>],
  ["Hierarchy", <><path d="M7 4H22V11H7Z" fill="#8d8d8d" /><path d="M14.500 11V15M7.500 20V15.500H21.500V20" stroke="#37817f" strokeWidth="1.500" /><path d="M5 20H10V25H5ZM19 20H24V25H19Z" fill="#37817f" /></>],
  ["Motion", <><path d="M9 6C2 9 2 20 9 23M12 6C5 9 5 20 12 23M6 7C0 11 0 19 6 22" stroke="#37817f" strokeWidth="1.500" /><circle cx="17" cy="14.500" r="8.500" fill="#999" /></>],
  ["Display", <path d="M5 6H24V18H5ZM12 19H17V21H20V24H9V21H12Z" fill="#999" />],
  ["Utilities", <path d="M9 5C14 6 14 10 13 12L24 22C25 25 22 26 20 24L11 14C8 15 4 14 4 10L8 12L11 9Z" fill="#999" />],
];

function Grip() {
  return <Icon w={9} h={8}><path d="M0 1H9M0 4H9M0 7H9" stroke="#999" strokeDasharray="1 1" /></Icon>;
}

function RollHead({ title, open }: { title: string; open?: boolean }) {
  return (
    <button className="flex h-[23px] w-full shrink-0 items-center px-[7px] text-[12px] font-bold text-white">
      <Icon w={16} h={8}>{open ? <path d="M0 1H9L4.500 7Z" fill="#bbb" /> : <path d="M1 0L7 4L1 8Z" fill="#bbb" />}</Icon>
      <span className="flex-1 text-left">{title}</span>
      <Grip />
    </button>
  );
}

function Check({ text }: { text: string }) {
  return (
    <label className="flex items-center gap-1">
      <input type="checkbox" className="h-[14px] w-[14px] appearance-none border border-[#474747] bg-[#575757]" />
      {text}
    </label>
  );
}

function FlatBtn({ children, width }: { children: string; width: string }) {
  return <button className={`h-[21px] rounded-[3px] border border-[#474747] bg-[#575757] leading-[18px] ${width}`}>{children}</button>;
}

function MiniSpin({ label }: { label: string }) {
  return <button aria-label={label} className="flex h-5 w-[15px] items-center justify-center border border-[#474747] bg-[#575757]"><UpDown color="#999" /></button>;
}

function CommandPanel() {
  return (
    <aside className="flex w-[255px] shrink-0 flex-col bg-[#444] pb-[2px] pl-[3px] text-[12px]">
      <div className="flex gap-[2px] bg-[#383838] pl-[2px] pt-px">
        {cmdTabs.map(([n, g], i) => (
          <button key={n} aria-label={n} className={`flex h-[34px] w-[38px] items-center justify-center rounded-t-[4px] ${i === 1 ? "bg-[#444]" : "bg-[#3a3a3a]"}`}>
            <Icon w={29} h={29}>{g}</Icon>
          </button>
        ))}
      </div>
      <div className="flex min-h-0 flex-1 flex-col border-l border-[#333] pl-[5px] pr-1 pt-2">
        <div className="flex items-center gap-[7px] pl-px">
          <input aria-label="Object name" defaultValue="Box001" className="h-[23px] min-w-0 flex-1 border border-[#3a3a3a] bg-[#666] pl-[3px] text-[#d4d4d4]" />
          <button aria-label="Object color" className="flex h-6 w-[22px] items-start border border-black bg-white"><span className="block h-[11px] w-full bg-black" /></button>
        </div>
        <div className="relative mt-3 pl-px">
          <select aria-label="Modifier list" defaultValue="m" className="block h-[23px] w-full appearance-none border border-[#3a3a3a] bg-[#666] pl-[2px] text-[#d4d4d4]">
            <option value="m">Modifier List</option>
          </select>
          <span className="pointer-events-none absolute right-[9px] top-2"><Caret /></span>
        </div>
        <div className="ml-px mt-[5px] flex h-[128px] shrink-0 border border-[#8c8c94]">
          <div className="flex flex-1 border border-white">
            <ul className="flex-1 overflow-hidden text-white">
              <li className="flex h-[21px]">
                <span className="flex w-6 items-center justify-center"><Icon w={8} h={6}><path d="M0 0H8L4 6Z" fill={L} /></Icon></span>
                <button className="flex-1 bg-[#5f8ac1] pl-[2px] text-left">Editable Poly</button>
              </li>
              {["Vertex", "Edge", "Border", "Polygon", "Element"].map((n, i) => (
                <li key={n} className="flex h-[21px] items-center">
                  <Icon w={36} h={21}><path d={i === 4 ? "M12.500 0V11M12.500 10.500H31" : "M12.500 0V21M12.500 10.500H31"} stroke="#000" strokeDasharray="1 1" /></Icon>
                  <button>{n}</button>
                </li>
              ))}
            </ul>
            <div className="flex w-5 flex-col items-center justify-between bg-[#f0f0f0] py-[7px]">
              <Icon w={12} h={8}><path d="M1 7L6 2L11 7" stroke="#444" strokeWidth="2" /></Icon>
              <span className="mb-auto mt-[6px] h-[69px] w-full bg-[#cdcdcd]" />
              <Icon w={12} h={8}><path d="M1 1L6 6L11 1" stroke="#444" strokeWidth="2" /></Icon>
            </div>
          </div>
        </div>
        <div className="mt-[9px] flex h-[26px] shrink-0 items-center pl-1">
          <button aria-label="Pin stack" className="w-[30px]"><Icon w={24} h={24}><path d="M14 1L23 10L20 11L18 17L15 18L6 10L7 7L12 5Z" fill="#aaa" /><path d="M10 14L2 22" stroke="#aaa" strokeWidth="2" /></Icon></button>
          <Sep />
          <button aria-label="Show end result" className="flex w-9 justify-center"><Icon w={12} h={24}><path d="M1 1.500H11M2.500 2V20C2.500 23 9.500 23 9.500 20V2" stroke="#999" strokeWidth="1.500" /><path d="M4 11H8V20C7.500 21.500 4.500 21.500 4 20Z" fill={T} /></Icon></button>
          <Sep />
          <button aria-label="Make unique" className="flex w-9 justify-center"><Icon w={24} h={24}><circle cx="6" cy="6" r="5" fill="#666" stroke="#2c2c2c" /><circle cx="12" cy="17" r="5.500" fill="#5a5a5a" stroke="#2c2c2c" /><circle cx="18" cy="17" r="5.500" fill="#4f4f4f" stroke="#2c2c2c" /><path d="M12 4H20V11" stroke="#2c2c2c" strokeWidth="2" /><path d="M16 10H23L20 15Z" fill="#2c2c2c" /></Icon></button>
          <button aria-label="Remove modifier" className="flex w-7 justify-center"><Icon w={18} h={24}><path d="M2 6V23H16V6Z" fill="#555" /><path d="M1 5H17M6 4V1H12V4M3 7V22H15V7M6.500 9V19M9 9V19M11.500 9V19" stroke="#2c2c2c" strokeWidth="2" /></Icon></button>
          <Sep />
          <button aria-label="Configure modifier sets" className="flex w-9 justify-center"><Icon w={24} h={24}><path d="M1 2H19V23H1Z" fill={L} /><path d="M3 5H17" stroke="#444" strokeWidth="1.500" /><path d="M3.500 8.500H8.500V13.500H3.500ZM11.500 8.500H16.500V13.500H11.500ZM3.500 15.500H8.500V20.500H3.500ZM11.500 15.500H16.500V20.500H11.500Z" stroke="#444" /><path d="M10 15L12 11L20 2L23 4L15 13Z" fill={O} stroke="#444" strokeWidth="0.700" /></Icon></button>
        </div>
        <div className="mt-[16px] flex h-2 items-center gap-[3px] px-[5px]">
          <span className="h-px flex-1 bg-[#666]" />
          <Icon w={13} h={4}><path d="M0 0.500H13M0 2.500H13" stroke="#ddd" strokeDasharray="1 1" /></Icon>
          <span className="h-px flex-1 bg-[#666]" />
        </div>
        <div className="mt-[3px] flex min-h-0 flex-1 gap-1">
          <div className="flex min-w-0 flex-1 flex-col gap-[4px] overflow-hidden">
            <section className="h-[293px] shrink-0 rounded-[3px] border border-[#3a3a3a] bg-[#525252] text-[#8a8a8a]">
              <RollHead title="Selection" open />
              <div className="flex h-10 items-center gap-2 pb-[2px] pl-[34px]">
                <button aria-label="Vertex"><Icon w={22} h={18}><path d="M4 9L5.500 7.500L7 9L5.500 11ZM10 13.500L11.500 12L13 13.500L11.500 15ZM14 3H18V4L16 5Z" fill="red" /></Icon></button>
                <button aria-label="Edge"><Icon w={22} h={18}><path d="M3 10L18 2L12 14Z" stroke="red" /></Icon></button>
                <button aria-label="Border"><Icon w={22} h={18}><path d="M6 4C8 0 14 1 15 7C16 13 12 16 8 16C6 15 5 13 8 10C9 8 7 7 6 6Z" stroke="red" strokeDasharray="3 1" /></Icon></button>
                <button aria-label="Polygon"><Icon w={22} h={18}><path d="M5.500 3.500H16.500V14.500H5.500Z" fill="red" stroke="#000" /></Icon></button>
                <button aria-label="Element"><Icon w={22} h={18}><path d="M4 8L8 3.500H16V10L12 14.500H4Z" fill="#80108a" stroke="#000" /><path d="M4 8H12V14.500H4ZM4 8L8 3.500H16L12 8Z" fill="red" stroke="#000" /></Icon></button>
              </div>
              <div className="flex flex-col gap-[7px] pl-[19px] leading-[17px]">
                <Check text="By Vertex" />
                <Check text="Ignore Backfacing" />
                <div className="flex h-[17px] items-center">
                  <div className="w-[88px]"><Check text="By Angle:" /></div>
                  <div className="flex h-5 w-[107px] items-center border border-[#474747] bg-[#575757] pr-1">
                    <input aria-label="Angle" defaultValue="45,0" className="w-0 flex-1 bg-transparent pl-[3px]" />
                    <UpDown color="#999" />
                  </div>
                </div>
              </div>
              <div className="mt-[6px] flex gap-2 pl-[17px]">
                <FlatBtn width="w-[96px]">Shrink</FlatBtn>
                <FlatBtn width="w-[96px]">Grow</FlatBtn>
              </div>
              <div className="mt-[5px] flex gap-2 pl-[17px]">
                <div className="flex w-[96px] items-center justify-between"><FlatBtn width="w-[76px]">Ring</FlatBtn><MiniSpin label="Ring shift" /></div>
                <div className="flex w-[96px] items-center justify-between"><FlatBtn width="w-[78px]">Loop</FlatBtn><MiniSpin label="Loop shift" /></div>
              </div>
              <fieldset className="ml-[7px] mt-[6px] h-[50px] w-[212px] rounded-[3px] border-2 border-[#3f3f3f]">
                <legend className="ml-1 px-[2px] leading-[18px] text-white">Preview Selection</legend>
                <div className="flex h-[24px] items-center pl-px">
                  <label className="flex w-[66px] items-center gap-2 text-white"><input type="radio" name="ps" defaultChecked className="h-[14px] w-[14px] appearance-none rounded-full border-[3px] border-[#666] bg-[#ddd]" />Off</label>
                  <label className="flex w-[82px] items-center gap-2"><input type="radio" name="ps" className="h-[14px] w-[14px] appearance-none rounded-full border border-[#474747] bg-[#575757]" />SubObj</label>
                  <label className="flex items-center gap-2"><input type="radio" name="ps" className="h-[14px] w-[14px] appearance-none rounded-full border border-[#474747] bg-[#575757]" />Multi</label>
                </div>
              </fieldset>
              <p className="pr-5 pt-[6px] text-right leading-[18px] text-white">Whole Object Selected</p>
            </section>
            <section className="shrink-0 rounded-[3px] border border-[#3a3a3a] bg-[#525252]"><RollHead title="Soft Selection" /></section>
            <section className="shrink-0 rounded-[3px] border border-[#3a3a3a] bg-[#525252]"><RollHead title="Edit Geometry" open /></section>
          </div>
          <div className="w-[7px] rounded-[4px] bg-[#353535]"><div className="h-[95px] rounded-[4px] border border-[#3a3a3a] bg-[#575757]" /></div>
        </div>
      </div>
    </aside>
  );
}

/* ---------- Status bar ---------- */

function Coord({ axis, value }: { axis: string; value: string }) {
  return (
    <label className="flex w-[103px] items-center gap-[3px] text-[#ddd]">
      <span className="w-[13px]">{axis}</span>
      <input defaultValue={value} className="h-[22px] w-[73px] border border-[#3c3c3c] bg-[#575757] pl-[3px] text-[#8d8d8d]" />
    </label>
  );
}

function NavBtn({ label, more, children, width = "w-7" }: { label: string; more?: boolean; children: React.ReactNode; width?: string }) {
  return (
    <button aria-label={label} className={`relative flex h-6 items-center justify-center ${width}`}>
      {children}
      {more && <span className="absolute bottom-0 right-0"><Icon w={5} h={5}><path d="M5 0V5H0Z" fill="#eee" /></Icon></span>}
    </button>
  );
}

function StatusBar() {
  return (
    <footer className="flex h-[61px] shrink-0 overflow-hidden bg-[#444] text-[12px] text-white">
      <div className="flex w-[129px] shrink-0 flex-col gap-px border-r border-[#111] pr-[6px] pt-px">
        <div className="h-[29px] border-2 border-[#777] border-b-white border-r-white bg-[#dcc3c5]" />
        <input aria-label="Listener" defaultValue="Welcome to MAXScript" className="h-[30px] w-full border-2 border-[#777] border-b-white border-r-white bg-white pb-[6px] pl-1 font-['Liberation_Mono',monospace] text-[15px] text-black" />
      </div>
      <div className="flex min-w-0 flex-1 flex-col pl-1">
        <div className="flex h-9 items-center whitespace-nowrap">
          <span className="w-[222px]">1 Object Selected</span>
          <div className="flex w-[101px]">
            <button aria-label="Isolate selection" className="flex w-[33px] justify-center"><Icon w={20} h={20}><path d="M1 6V1.500H6M14 1.500H18.500V6M18.500 14V18.500H14M6 18.500H1V14" stroke={L} strokeWidth="1.500" /><path d="M6 6H14V14H6Z" fill={T} /></Icon></button>
            <button aria-label="Selection lock" className="flex w-[33px] items-center justify-center"><Icon w={14} h={18}><path d="M3.500 8V5C3.500 0.500 10.500 0.500 10.500 5V8" stroke={L} strokeWidth="2" /><path d="M1 8H13V17H1Z" fill={L} /><path d="M6 11H8V15H6Z" fill="#333" /></Icon></button>
            <button aria-label="Absolute mode" className="flex w-[33px] items-center justify-center"><Icon w={18} h={18}><path d="M1 1H17V17H1Z" fill={L} /><path d="M3 3H15V15H3Z" fill="#444" /><circle cx="9" cy="9" r="3.500" stroke={L} strokeWidth="1.800" /><path d="M9 3V5.500M9 12.500V15M3 9H5.500M12.500 9H15" stroke={L} strokeWidth="2" /></Icon></button>
          </div>
          <Coord axis="X:" value="9,573" />
          <Coord axis="Y:" value="51,344" />
          <Coord axis="Z:" value="0,0" />
          <span>Grid = 10,0</span>
        </div>
        <div className="flex h-[25px] items-center whitespace-nowrap text-[#e8e8e8]">
          <span className="w-[602px]">Click or click-and-drag to select objects</span>
          <span className="mr-px h-5 w-px bg-[#111]" />
          <button aria-label="Adaptive degradation" className="flex h-[25px] w-[26px] items-center justify-center rounded-[3px] bg-[#5f8ac1]"><Icon w={16} h={18}><path d="M8 1L15 5V13L8 17L1 13V5Z M1 5L8 9L15 5M8 9V17M4 7V11M12 7V11" stroke="#333" strokeWidth="2.500" /><path d="M8 1L15 5V13L8 17L1 13V5Z M1 5L8 9L15 5M8 9V17" stroke={L} strokeWidth="1.200" /></Icon></button>
          <button className="pl-[7px] text-[#ccc]">Add Time Tag</button>
        </div>
      </div>
      <div className="flex shrink-0 gap-[6px] pt-1 text-[#d4d4d4]">
        <button aria-label="Set keys" className="flex h-[54px] w-[53px] items-center justify-center rounded-[4px] bg-[#666]">
          <Icon w={38} h={38}><path d="M13 2H20V14H32V20H20V33H13V20H1V14H13Z" fill={L} stroke="#444" /><circle cx="23" cy="31" r="3.500" stroke="#444" strokeWidth="4.500" /><path d="M25 28L35 20M30 24L33 27M33 21L36 24" stroke="#444" strokeWidth="4" /><circle cx="23" cy="31" r="3.500" stroke={T} strokeWidth="2.500" /><path d="M25 28L35 20M30 24L33 27M33 21L36 24" stroke={T} strokeWidth="2" /></Icon>
        </button>
        <div className="flex w-[57px] flex-col gap-[2px]">
          <button className="h-[26px] rounded-[3px] bg-[#666]">Auto</button>
          <button className="h-[26px] rounded-[3px] bg-[#666]">Set K.</button>
        </div>
        <div className="flex w-[143px] flex-col gap-[5px]">
          <div className="relative">
            <select aria-label="Key set" defaultValue="Selected" className="block h-[23px] w-full appearance-none bg-[#666] pl-2"><option>Selected</option></select>
            <span className="pointer-events-none absolute right-[9px] top-2"><Caret /></span>
          </div>
          <div className="flex justify-between">
            <NavBtn label="Default tangents" more><Icon w={22} h={22}><path d="M3 20C8 18 7 9 8 4M19 20C14 18 15 9 14 4" stroke={T} strokeWidth="2.200" /><path d="M2 3.500H20" stroke={L} /><circle cx="2.500" cy="3.500" r="2" fill={L} /><circle cx="19.500" cy="3.500" r="2" fill={L} /><path d="M8.500 1H13.500V6H8.500Z" fill="#444" stroke={L} strokeWidth="1.500" /></Icon></NavBtn>
            <button className="h-[26px] w-[113px] rounded-[3px] bg-[#666]">Filters...</button>
          </div>
        </div>
      </div>
      <div className="w-[163px] shrink-0 pl-2 pt-1 text-[#d4d4d4]">
        <div className="flex items-center">
          <NavBtn label="Go to start"><Icon w={20} h={16}><path d="M1 1H4V15H1ZM12 2V14L5 8ZM20 2V14L12.500 8Z" fill={L} /></Icon></NavBtn>
          <span className="h-5 w-px bg-[#111]" />
          <NavBtn label="Previous frame" width="w-[34px]"><Icon w={19} h={16}><path d="M8 1V15L0 8ZM10 1H13V15H10ZM15 1H18V15H15Z" fill={L} /></Icon></NavBtn>
          <NavBtn label="Play" more width="w-6"><Icon w={15} h={20}><path d="M0 1L15 10L0 19Z" fill={L} /></Icon></NavBtn>
          <NavBtn label="Next frame" width="w-[32px]"><Icon w={19} h={16}><path d="M11 1V15L19 8ZM1 1H4V15H1ZM6 1H9V15H6Z" fill={L} /></Icon></NavBtn>
          <span className="h-5 w-px bg-[#111]" />
          <NavBtn label="Go to end" width="w-[30px]"><Icon w={20} h={16}><path d="M19 1H16V15H19ZM8 2V14L15 8ZM0 2V14L7.500 8Z" fill={L} /></Icon></NavBtn>
        </div>
        <div className="flex items-center pt-1">
          <NavBtn label="Key mode"><Icon w={16} h={12}><path d="M6 0V12L0 6ZM9 0V12L15 6Z" fill={L} /></Icon></NavBtn>
          <div className="flex h-[22px] w-[91px] items-center border-x-2 border-[#222] bg-[#666] pr-[3px]">
            <input aria-label="Frame" defaultValue="0" className="w-0 flex-1 bg-transparent pl-1" />
            <UpDown color="#ddd" />
          </div>
          <NavBtn label="Time configuration" width="w-[34px]"><Icon w={20} h={20}><circle cx="8" cy="8" r="8" fill={L} /><path d="M8 2V8H13" stroke="#444" strokeWidth="1.500" /><circle cx="14" cy="14" r="3.500" fill="#444" stroke={O} strokeWidth="2" /><path d="M14 8V11M14 17V20M8 14H11M17 14H20M10 10L12 12M18 10L16 12M10 18L12 16M18 18L16 16" stroke={O} strokeWidth="1.800" /></Icon></NavBtn>
        </div>
      </div>
      <div className="grid w-[120px] shrink-0 grid-cols-4 content-start gap-y-1 pr-2 pt-1">
        <NavBtn label="Zoom"><Icon w={20} h={20}><circle cx="12" cy="7" r="5.500" stroke={L} strokeWidth="2.200" /><path d="M8 12L2 18" stroke={L} strokeWidth="3" /></Icon></NavBtn>
        <NavBtn label="Zoom all"><Icon w={20} h={20}><path d="M8 1H13V7H8ZM14 1H19V7H14ZM14 8H19V13H14Z" fill={T} /><circle cx="9" cy="10" r="4" fill="#444" stroke={L} strokeWidth="2" /><path d="M6 13L1 18" stroke={L} strokeWidth="3" /></Icon></NavBtn>
        <NavBtn label="Zoom extents" more><Icon w={22} h={20}><path d="M1 5V1H5M17 1H21V5M1 15V19H5" stroke={L} strokeWidth="1.500" /><path d="M11 3L18 6.500V14L11 17.500L4 14V6.500Z" fill={T} /><path d="M4 6.500L11 10L18 6.500M11 10V17.500" stroke="#2b6f6e" /></Icon></NavBtn>
        <NavBtn label="Zoom extents all" more><Icon w={20} h={20}><path d="M10 3L15 0L19 3V12L15 15L10 11Z" fill={T} /><path d="M14 4V14" stroke="#2b6f6e" /><path d="M4 7L8 10L5 13L1 10ZM9 11L13 14L9 18L5 14Z" fill={L} /></Icon></NavBtn>
        <NavBtn label="Zoom region"><Icon w={20} h={20}><path d="M1 14V1H19V13H16" stroke={L} strokeWidth="1.500" strokeDasharray="3 2" /><circle cx="10" cy="9" r="4.500" stroke={T} strokeWidth="2" /><path d="M7 13L2 18" stroke={T} strokeWidth="2.500" /></Icon></NavBtn>
        <NavBtn label="Pan" more><Icon w={18} h={20}><path d="M5 19L1 12L2 10L5 12V4H7V10L8 2H10L10.500 10L12 3H13.500V11L15 6H17L15 15L13 19Z" fill={L} /></Icon></NavBtn>
        <NavBtn label="Orbit" more><Icon w={20} h={20}><circle cx="9" cy="9" r="7" fill={L} /><path d="M9 2V9H2C2 5 5 2 9 2Z" fill={T} /><path d="M18 2C20 8 10 18 2 18C0 12 14 0 18 2" stroke="#444" strokeWidth="3" /><path d="M18 2C20 8 10 18 2 18" stroke={L} strokeWidth="1.500" /></Icon></NavBtn>
        <NavBtn label="Maximize viewport"><Icon w={18} h={18}><path d="M1 1H17V17H1Z" fill={L} /><path d="M1 10H8V17" stroke="#444" strokeWidth="1.500" /><path d="M8 3H15V10L13 7.500L9 12L6 9.500L10.500 5.500Z" fill="#333" /></Icon></NavBtn>
      </div>
    </footer>
  );
}

export default function App() {
  return (
    <div className="flex h-screen w-full flex-col overflow-hidden bg-[#444] font-['Noto_Sans',sans-serif]">
      <TitleBar />
      <MenuBar />
      <MainToolbar />
      <Ribbon />
      <main className="flex min-h-0 flex-1">
        <LeftStrip />
        <SceneExplorer />
        <div className="flex min-w-0 flex-1 flex-col pt-px">
          <Viewport />
          <TimeControls />
        </div>
        <CommandPanel />
      </main>
      <StatusBar />
    </div>
  );
}
